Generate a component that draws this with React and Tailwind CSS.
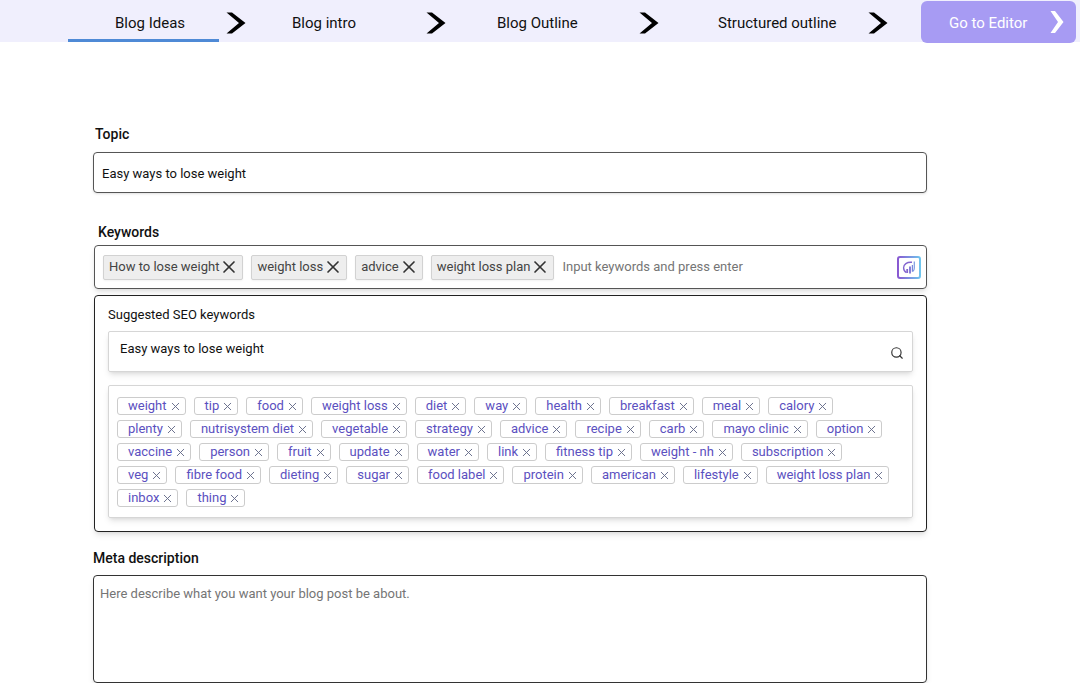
import { useState } from 'react';
import { Search, X } from 'lucide-react';

const SUGGESTED = [
  'weight', 'tip', 'food', 'weight loss', 'diet', 'way', 'health', 'breakfast', 'meal', 'calory',
  'plenty', 'nutrisystem diet', 'vegetable', 'strategy', 'advice', 'recipe', 'carb', 'mayo clinic', 'option',
  'vaccine', 'person', 'fruit', 'update', 'water', 'link', 'fitness tip', 'weight - nh', 'subscription',
  'veg', 'fibre food', 'dieting', 'sugar', 'food label', 'protein', 'american', 'lifestyle', 'weight loss plan',
  'inbox', 'thing',
];

function StepArrow() {
  return (
    <svg width="20" height="22" viewBox="0 0 20 22" className="shrink-0" aria-hidden="true">
      <path d="M0.5 0.5H6L19.5 11L6 21.5H0.5L13 11Z" fill="#000" />
    </svg>
  );
}

function SeoIcon() {
  return (
    <svg width="24" height="23" viewBox="0 0 24 23" fill="none" aria-hidden="true">
      <defs>
        <linearGradient id="seo-frame" x1="0" y1="0" x2="24" y2="0" gradientUnits="userSpaceOnUse">
          <stop offset="0" stopColor="#8a55d0" />
          <stop offset="0.5" stopColor="#7a8fe0" />
          <stop offset="1" stopColor="#6fc8ee" />
        </linearGradient>
      </defs>
      <rect x="1" y="1" width="22" height="21" rx="2" stroke="url(#seo-frame)" strokeWidth="2" />
      <path d="M15 6.3C9.8 5.8 6.6 8.4 6.6 11.8C6.6 14 7.7 15.7 9.4 16.6" stroke="#8365cf" strokeWidth="1.4" />
      <path d="M10.2 17V13" stroke="#8365cf" strokeWidth="1.8" />
      <path d="M13 17.4V10.6" stroke="#7a70d4" strokeWidth="1.8" />
      <path d="M15.4 15.8V9" stroke="#7c87dc" strokeWidth="1.2" />
      <path d="M17.3 5.5V12C17.3 13.4 16.8 14.6 16 15.4" stroke="#7c9be2" strokeWidth="1.2" />
    </svg>
  );
}

function Step({ label, className, active }) {
  return (
    <li className="relative flex items-center justify-between pt-1">
      <a href="#" aria-current={active ? 'step' : undefined} className={className}>
        {label}
      </a>
      <StepArrow />
      {active && <span className="absolute bottom-0 left-0 h-[3px] w-[151px] bg-[#4f8ad6]" />}
    </li>
  );
}

export default function App() {
  const [topic, setTopic] = useState('Easy ways to lose weight');
  const [query, setQuery] = useState('Easy ways to lose weight');
  const [draft, setDraft] = useState('');
  const [meta, setMeta] = useState('');
  const [keywords, setKeywords] = useState(['How to lose weight', 'weight loss', 'advice', 'weight loss plan']);
  const [suggested, setSuggested] = useState(SUGGESTED);

  const addKeyword = (e) => {
    if (e.key !== 'Enter' || !draft.trim()) return;
    e.preventDefault();
    setKeywords(prev => [...new Set([...prev, draft.trim()])]);
    setDraft('');
  };

  return (
    <div className="bg-white font-[Roboto,sans-serif] text-[13px] text-[#111]">
      {/* Steps */}
      <header className="flex h-[42px] bg-[#f0effd]">
        <ol className="ml-[68px] mr-[33px] grid flex-1 grid-cols-[178fr_200fr_213fr_229fr] text-[15px]">
          <Step label="Blog Ideas" className="pl-[47px]" active />
          <Step label="Blog intro" className="pl-[46px]" />
          <Step label="Blog Outline" className="pl-[51px]" />
          <Step label="Structured outline" className="pl-[59px]" />
        </ol>
        <button className="mr-1 mt-px flex h-[42px] w-[155px] items-center justify-between rounded-md bg-[#a79bf3] pl-7 pr-3 text-[15px] text-white">
          <span className="pt-0.5">Go to Editor</span>
          <svg width="14" height="22" viewBox="0 0 14 22" aria-hidden="true">
            <path d="M0.5 0H5L13.5 11L5 22H0.5L8 11Z" fill="#fff" />
          </svg>
        </button>
      </header>

      <main className="ml-[93px] mr-[153px] pt-[82px]">
        {/* Topic */}
        <label htmlFor="topic" className="block pl-0.5 text-sm font-medium leading-5">Topic</label>
        <input
          id="topic"
          value={topic}
          onChange={e => setTopic(e.target.value)}
          className="mt-2 block h-[41px] w-full rounded-sm border border-[#555] px-2 pt-0.5 shadow-sm outline-none"
        />

        {/* Keywords */}
        <label htmlFor="keywords" className="mt-[29px] block pl-[5px] text-sm font-medium leading-5">Keywords</label>
        <div className="ml-px mt-[3px] flex h-[44px] items-center gap-2 rounded-sm border border-[#555] pl-2 pr-[5px] shadow-md">
          {keywords.map(word => (
            <span
              key={word}
              className="flex h-[25px] items-center whitespace-nowrap rounded-xs border border-[#d2d2d2] bg-[#eee] pl-[5px] pr-[3px] text-[#444] shadow-xs"
            >
              {word}
              <button
                aria-label={`Remove ${word}`}
                onClick={() => setKeywords(prev => prev.filter(k => k !== word))}
                className="text-[#333]"
              >
                <X size={20} strokeWidth={2} />
              </button>
            </span>
          ))}
          <input
            id="keywords"
            value={draft}
            onChange={e => setDraft(e.target.value)}
            onKeyDown={addKeyword}
            placeholder="Input keywords and press enter"
            className="min-w-0 flex-1 outline-none placeholder:text-[#757575]"
          />
          <button aria-label="Suggest SEO keywords">
            <SeoIcon />
          </button>
        </div>

        {/* Suggestions */}
        <section className="ml-px mt-1.5 rounded-sm border border-[#222] px-[13px] pb-[13px] pt-[9px] shadow-md">
          <label htmlFor="seo-search" className="block leading-5">Suggested SEO keywords</label>
          <div className="mt-1.5 flex h-[41px] items-center rounded-xs border border-[#d6d6d6] pl-[11px] pr-2 shadow-md">
            <input
              id="seo-search"
              value={query}
              onChange={e => setQuery(e.target.value)}
              className="min-w-0 flex-1 pb-1.5 outline-none"
            />
            <button aria-label="Search" className="pt-0.5 text-[#333]">
              <Search size={14} strokeWidth={2} />
            </button>
          </div>
          <ul className="mt-[13px] flex flex-wrap gap-x-2 gap-y-[5px] rounded-xs border border-[#d6d6d6] pb-2.5 pl-2 pr-3.5 pt-[11px] shadow-md">
            {suggested.map(word => (
              <li
                key={word}
                className="flex h-[18px] items-center gap-0.5 rounded-[3px] border border-[#ccc] pl-2.5 pr-[3px] text-[#5b50c0]"
              >
                {word}
                <button
                  aria-label={`Remove ${word}`}
                  onClick={() => setSuggested(prev => prev.filter(k => k !== word))}
                  className="text-[#666c8a]"
                >
                  <X size={13} strokeWidth={1.75} />
                </button>
              </li>
            ))}
          </ul>
        </section>

        {/* Meta description */}
        <label htmlFor="meta" className="mt-4 block text-sm font-medium leading-5">Meta description</label>
        <textarea
          id="meta"
          value={meta}
          onChange={e => setMeta(e.target.value)}
          placeholder="Here describe what you want your blog post be about."
          className="mt-[7px] block h-[108px] w-full resize-none rounded-sm border border-[#333] px-1.5 py-2 shadow-md outline-none placeholder:text-[#757575]"
        />
      </main>
    </div>
  );
}
